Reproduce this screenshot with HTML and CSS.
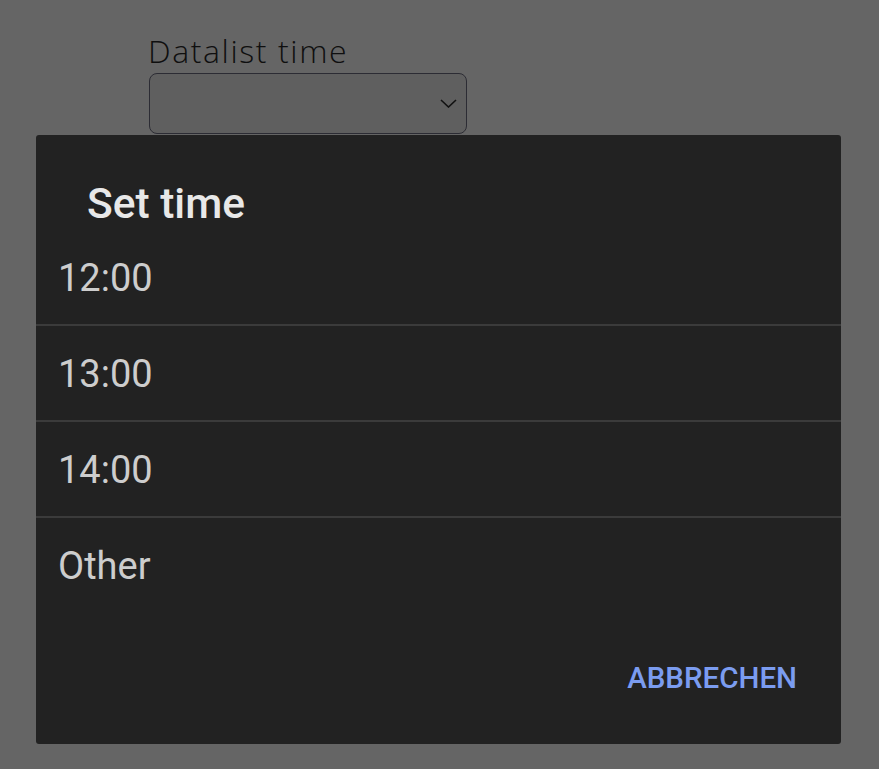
FILE: index.html
```html
<!DOCTYPE html>
<html lang="de">
<head>
<meta charset="utf-8">
<title>Datalist time</title>
<link rel="stylesheet" href="styles.css">
</head>
<body>
<main class="page">
  <label class="field-label" for="dt">Datalist time</label>
  <div class="select" id="dt">
    <svg class="chevron" width="17" height="9" viewBox="0 0 17 9"><path d="M1 1 L8.5 8 L16 1" fill="none" stroke="#111" stroke-width="1.6"/></svg>
  </div>
</main>
<div class="dialog" role="dialog">
  <h2 class="dialog-title">Set time</h2>
  <ul class="options">
    <li class="option">12:00</li>
    <li class="option">13:00</li>
    <li class="option">14:00</li>
    <li class="option">Other</li>
  </ul>
  <div class="actions">
    <button class="btn">ABBRECHEN</button>
  </div>
</div>
</body>
</html>
```
FILE: styles.css
```css
html, body { margin: 0; padding: 0; }
body {
  background: #656565;
  width: 879px;
  height: 769px;
  overflow: hidden;
  font-family: Roboto, "Liberation Sans", sans-serif;
}
.page {
  padding: 30px 0 0 148px;
  display: flex;
  flex-direction: column;
  align-items: flex-start;
}
.field-label {
  font-family: "Open Sans", Inter, sans-serif;
  font-weight: 300;
  font-size: 32px;
  line-height: 42px;
  letter-spacing: 1.6px;
  color: #0f0f0f;
}
.select {
  margin-top: 1px;
  margin-left: 1px;
  width: 307px;
  height: 59px;
  border: 1.5px solid #2c2c34;
  border-radius: 8px;
  background: #5f5f5f;
  display: flex;
  align-items: center;
  justify-content: flex-end;
  padding-right: 9px;
  box-sizing: content-box;
}
.chevron { display: block; }
.dialog {
  position: fixed;
  left: 36px;
  top: 135px;
  width: 805px;
  height: 609px;
  background: #222222;
  border-radius: 3px;
  display: flex;
  flex-direction: column;
}
.dialog-title {
  margin: 0;
  height: 95px;
  box-sizing: border-box;
  padding: 45px 0 0 51px;
  font-size: 42.5px;
  line-height: 48px;
  font-weight: 500;
  color: #e8e8e8;
}
.options { list-style: none; margin: 0; padding: 0; }
.option {
  display: flex;
  align-items: center;
  padding-left: 22px;
  padding-top: 2px;
  box-sizing: border-box;
  height: 96px;
  font-size: 38px;
  color: #cdcdcd;
  border-top: 2px solid #3b3b3b;
}
.option:first-child { border-top: none; height: 94px; }
.actions {
  flex: 1;
  display: flex;
  justify-content: flex-end;
  align-items: center;
  padding-right: 44px;
}
.btn {
  background: none;
  border: none;
  padding: 0;
  font-family: Roboto, "Liberation Sans", sans-serif;
  font-size: 29.5px;
  font-weight: 500;
  color: #7b9cf0;
}
```
